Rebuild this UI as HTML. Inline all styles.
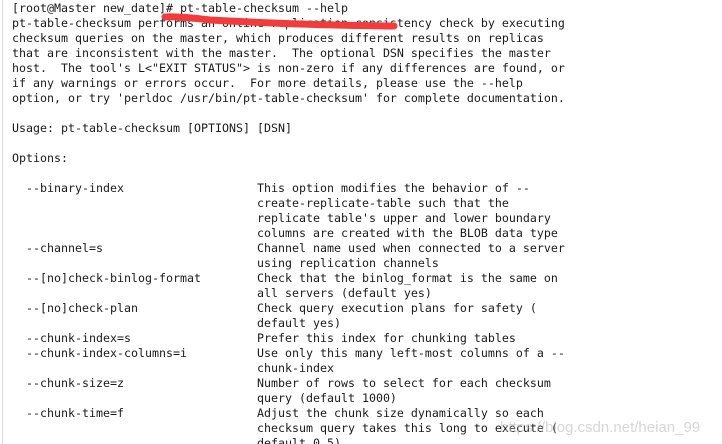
<!DOCTYPE html>
<html><head><meta charset="utf-8"><style>
html,body{margin:0;padding:0;background:#fff;width:722px;height:444px;overflow:hidden;position:relative}
pre{position:absolute;left:12px;top:1px;margin:0;font-family:"DejaVu Sans Mono","Liberation Mono",monospace;font-size:11.63px;line-height:15px;color:#1a1a1a}
.bl{position:absolute;left:2px;top:0;width:1px;height:444px;background:#ddd}
.wm{position:absolute;left:500px;top:419px;font-family:"Liberation Sans",sans-serif;font-size:15px;color:rgba(180,180,180,0.55)}
svg{position:absolute;left:0;top:0}
</style></head><body>
<div class="bl"></div>
<pre>[root@Master new_date]# pt-table-checksum --help
pt-table-checksum performs an online replication consistency check by executing
checksum queries on the master, which produces different results on replicas
that are inconsistent with the master.  The optional DSN specifies the master
host.  The tool's L&lt;"EXIT STATUS"&gt; is non-zero if any differences are found, or
if any warnings or errors occur.  For more details, please use the --help
option, or try 'perldoc /usr/bin/pt-table-checksum' for complete documentation.

Usage: pt-table-checksum [OPTIONS] [DSN]

Options:

  --binary-index                   This option modifies the behavior of --
                                   create-replicate-table such that the
                                   replicate table's upper and lower boundary
                                   columns are created with the BLOB data type
  --channel=s                      Channel name used when connected to a server
                                   using replication channels
  --[no]check-binlog-format        Check that the binlog_format is the same on
                                   all servers (default yes)
  --[no]check-plan                 Check query execution plans for safety (
                                   default yes)
  --chunk-index=s                  Prefer this index for chunking tables
  --chunk-index-columns=i          Use only this many left-most columns of a --
                                   chunk-index
  --chunk-size=z                   Number of rows to select for each checksum
                                   query (default 1000)
  --chunk-time=f                   Adjust the chunk size dynamically so each
                                   checksum query takes this long to execute (
                                   default 0.5)</pre>
<svg width="722" height="444"><path d="M165 17 Q175 16 210 20 Q300 25 394 26" stroke="#f43b3b" stroke-width="7" fill="none" stroke-linecap="round"/></svg>
<div class="wm">https://blog.csdn.net/heian_99</div>
</body></html>
